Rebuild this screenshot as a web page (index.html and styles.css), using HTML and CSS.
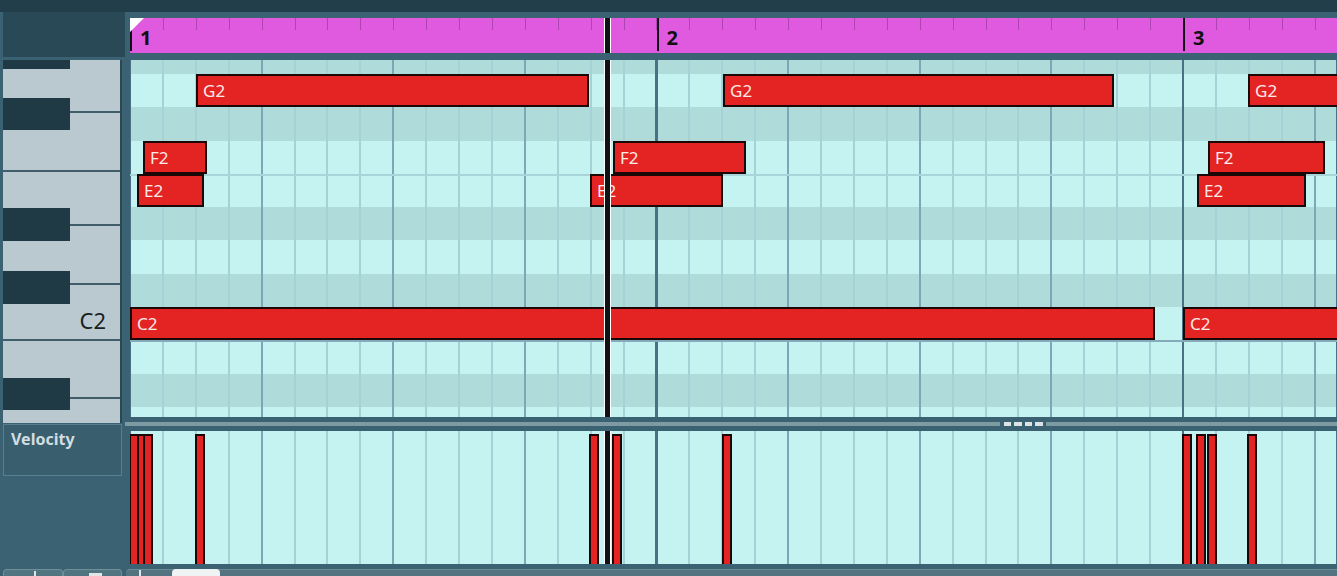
FILE: index.html
```html
<!DOCTYPE html>
<html lang="en">
<head>
  <meta charset="UTF-8">
  <meta name="viewport" content="width=device-width, initial-scale=1">
  <title>Key Editor</title>
  <link rel="stylesheet" href="styles.css">
</head>
<body>
  <div class="topbar"></div>

  <div class="editor">
    <aside class="side">
      <div class="side-head"></div>

      <div class="keyboard">
        <div class="wkey k-g2"></div>
        <div class="wkey k-f2"></div>
        <div class="wkey k-e2"></div>
        <div class="wkey k-d2"></div>
        <div class="wkey k-c2"><span class="key-name">C2</span></div>
        <div class="wkey k-b1"></div>
        <div class="wkey k-a1"></div>
        <div class="wkey k-g1"></div>

        <div class="bkey k-gs2"></div>
        <div class="bkey k-fs2"></div>
        <div class="bkey k-ds2"></div>
        <div class="bkey k-cs2"></div>
        <div class="bkey k-as1"></div>
      </div>

      <div class="lane-label">Velocity</div>

      <div class="side-foot">
        <div class="foot-btn"><span class="ico-stick"></span></div>
        <div class="foot-btn"><span class="ico-box"></span></div>
      </div>
    </aside>

    <main class="roll">
      <div class="ruler">
        <div class="loop-mark"></div>
        <div class="bar">1</div>
        <div class="bar">2</div>
        <div class="bar">3</div>
        <div class="playhead"></div>
      </div>

      <div class="grid">
        <div class="row dark"></div>
        <!-- G2 -->
        <div class="row">
          <div class="note" style="left:66px;width:393px">G2</div>
          <div class="note" style="left:593px;width:391px">G2</div>
          <div class="note" style="left:1118px;width:220px">G2</div>
        </div>
        <div class="row dark"></div>
        <!-- F2 -->
        <div class="row">
          <div class="note" style="left:13px;width:64px">F2</div>
          <div class="note" style="left:483px;width:133px">F2</div>
          <div class="note" style="left:1078px;width:117px">F2</div>
        </div>
        <!-- E2 -->
        <div class="row e-line">
          <div class="note" style="left:7px;width:67px">E2</div>
          <div class="note" style="left:460px;width:133px">E2</div>
          <div class="note" style="left:1067px;width:109px">E2</div>
        </div>
        <div class="row dark"></div>
        <div class="row"></div>
        <div class="row dark"></div>
        <!-- C2 -->
        <div class="row">
          <div class="note" style="left:0;width:1025px">C2</div>
          <div class="note" style="left:1053px;width:220px">C2</div>
        </div>
        <div class="row octave"></div>
        <div class="row dark"></div>
        <div class="row"></div>

        <div class="playhead"></div>
      </div>

      <div class="splitter">
        <div class="split-line"></div>
        <div class="grip"><span></span><span></span><span></span><span></span></div>
        <div class="split-line"></div>
      </div>

      <div class="velocity">
        <div class="vel" style="left:-1px"></div>
        <div class="vel" style="left:7px"></div>
        <div class="vel" style="left:13px"></div>
        <div class="vel" style="left:65px"></div>
        <div class="vel" style="left:459px"></div>
        <div class="vel" style="left:482px"></div>
        <div class="vel" style="left:592px"></div>
        <div class="vel" style="left:1052px"></div>
        <div class="vel" style="left:1066px"></div>
        <div class="vel" style="left:1077px"></div>
        <div class="vel" style="left:1117px"></div>
        <div class="playhead"></div>
      </div>

      <div class="roll-foot">
        <span class="foot-plus"></span>
        <span class="foot-pill"></span>
      </div>
    </main>
  </div>
</body>
</html>
```

FILE: styles.css
```css
body {
  margin: 0;
  height: 576px;
  overflow: hidden;
  background: #3a6272;
  font-family: "Noto Sans", sans-serif;
}
.topbar {
  height: 12px;
  background: #223e4a;
}
.editor {
  display: flex;
  height: 564px;
  padding-left: 3px;
}

/* left column */
.side {
  flex: none;
  width: 119px;
  display: flex;
  flex-direction: column;
}
.side-head {
  height: 45px;
  margin-right: -3px;
  margin-bottom: 3px;
  background: #284955;
}
.keyboard {
  position: relative;
  height: 363px;
  overflow: hidden;
  box-sizing: border-box;
  background: #bac8cf;
  border-right: 2px solid #2a4854;
}
.wkey {
  height: 58px;
  box-sizing: border-box;
  border-bottom: 2px solid #3f5e6a;
}
.k-g2 { height: 53px; }
.k-f2 { height: 59px; }
.k-e2 { height: 54px; }
.k-d2 { height: 59px; }
.k-c2 {
  height: 56px;
  display: flex;
  justify-content: flex-end;
  align-items: flex-end;
  padding: 0 14px 8px 0;
}
.key-name {
  font-size: 22px;
  line-height: 22px;
  color: #1b1f22;
}
.bkey {
  position: absolute;
  left: 0;
  width: 67px;
  height: 33px;
  background: #203a45;
}
.k-gs2 { top: -24px; }
.k-fs2 { top: 38px; height: 32px; }
.k-ds2 { top: 148px; }
.k-cs2 { top: 211px; }
.k-as1 { top: 318px; height: 32px; }

.lane-label {
  margin-top: 1px;
  height: 52px;
  box-sizing: border-box;
  padding: 6px 7px;
  border: 1px solid #587f8e;
  background: #395f6e;
  color: #d3dde1;
  font-size: 16px;
  line-height: 16px;
  font-weight: 700;
}
.side-foot {
  margin-top: auto;
  height: 7px;
  display: flex;
}
.foot-btn {
  flex: 1;
  box-sizing: border-box;
  border: 1px solid #6f8f9a;
  border-bottom: 0;
  border-radius: 4px 4px 0 0;
  background: #527582;
}
.ico-stick {
  display: block;
  width: 2px;
  height: 6px;
  margin: 1px 0 0 30px;
  background: #dfe6e8;
}
.ico-box {
  display: block;
  width: 13px;
  height: 3px;
  margin: 3px 0 0 25px;
  background: #dfe6e8;
}

/* right column */
.roll {
  flex: 1;
  min-width: 0;
  margin-left: 8px;
  padding-top: 6px;
  display: flex;
  flex-direction: column;
}
.ruler {
  position: relative;
  display: flex;
  height: 35px;
  margin-bottom: 7px;
  overflow: hidden;
  background-color: #e05ae0;
  background-image: repeating-linear-gradient(90deg, #b043b3 0 1px, transparent 1px 32.906px);
  background-size: 100% 12px;
  background-repeat: no-repeat;
}
.bar {
  flex: 0 0 526.5px;
  height: 33px;
  box-sizing: border-box;
  padding: 10px 0 0 8px;
  border-left: 2px solid #150d18;
  font-size: 20px;
  line-height: 20px;
  font-weight: 700;
  color: #111;
}
.loop-mark {
  position: absolute;
  left: -1px;
  top: 0;
  width: 0;
  height: 0;
  border-top: 15px solid #fff;
  border-right: 15px solid transparent;
  z-index: 1;
}
.playhead {
  position: absolute;
  top: 0;
  bottom: 0;
  left: 474px;
  width: 7px;
  box-sizing: border-box;
  background: #0f1215;
  border-left: 1px solid #fff;
  border-right: 1px solid #fff;
  z-index: 2;
}

.grid {
  position: relative;
  height: 357px;
  overflow: hidden;
  display: grid;
  grid-template-rows: 14px repeat(10, 33.3px) 1fr;
}
.row,
.velocity {
  position: relative;
  background-color: #c4f3f1;
  background-image:
    repeating-linear-gradient(90deg, #4b6f84 0 2px, transparent 2px 526.5px),
    repeating-linear-gradient(90deg, #7ea6b5 0 2px, transparent 2px 131.625px),
    repeating-linear-gradient(90deg, #a5d2d7 0 2px, transparent 2px 32.906px);
  background-position: -1px 0;
}
.row.dark {
  background-color: #afdcdb;
}
.row.e-line {
  box-shadow: inset 0 2px #a8d5da;
}
.row.octave {
  box-shadow: inset 0 2px #85abba;
}
.note {
  position: absolute;
  top: 0;
  bottom: 0;
  z-index: 1;
  box-sizing: border-box;
  padding: 1px 0 0 5px;
  border: 2px solid #1c0707;
  background: #e42323;
  color: #fbeaea;
  font-size: 17px;
  line-height: 28px;
  white-space: nowrap;
  overflow: hidden;
}

.splitter {
  display: flex;
  align-items: center;
  height: 14px;
  margin-left: -5px;
}
.split-line {
  flex: 1;
  height: 4px;
  background: #7e9ba4;
}
.split-line:first-child {
  flex: 0 0 875px;
}
.grip {
  display: flex;
  gap: 3px;
  margin: 0 3px 0 4px;
}
.grip span {
  width: 7px;
  height: 4px;
  background: #dce4e6;
}
.grip span:nth-child(even) {
  width: 8px;
}

.velocity {
  height: 133px;
  overflow: hidden;
}
.vel {
  position: absolute;
  top: 3px;
  width: 10px;
  height: 140px;
  box-sizing: border-box;
  border: 2px solid #1a0606;
  background: #e42323;
}

.roll-foot {
  display: flex;
  align-items: flex-start;
  height: 7px;
  margin: 5px 0 0 -4px;
  box-sizing: border-box;
  border-top: 1px solid #6a8b96;
  border-radius: 4px 0 0 0;
  background: #52737f;
}
.foot-plus {
  width: 2px;
  height: 6px;
  margin-left: 13px;
  background: #dfe6e8;
}
.foot-pill {
  width: 48px;
  height: 7px;
  margin: -1px 0 0 31px;
  border-radius: 4px 4px 0 0;
  background: #f0f3f4;
}
```
